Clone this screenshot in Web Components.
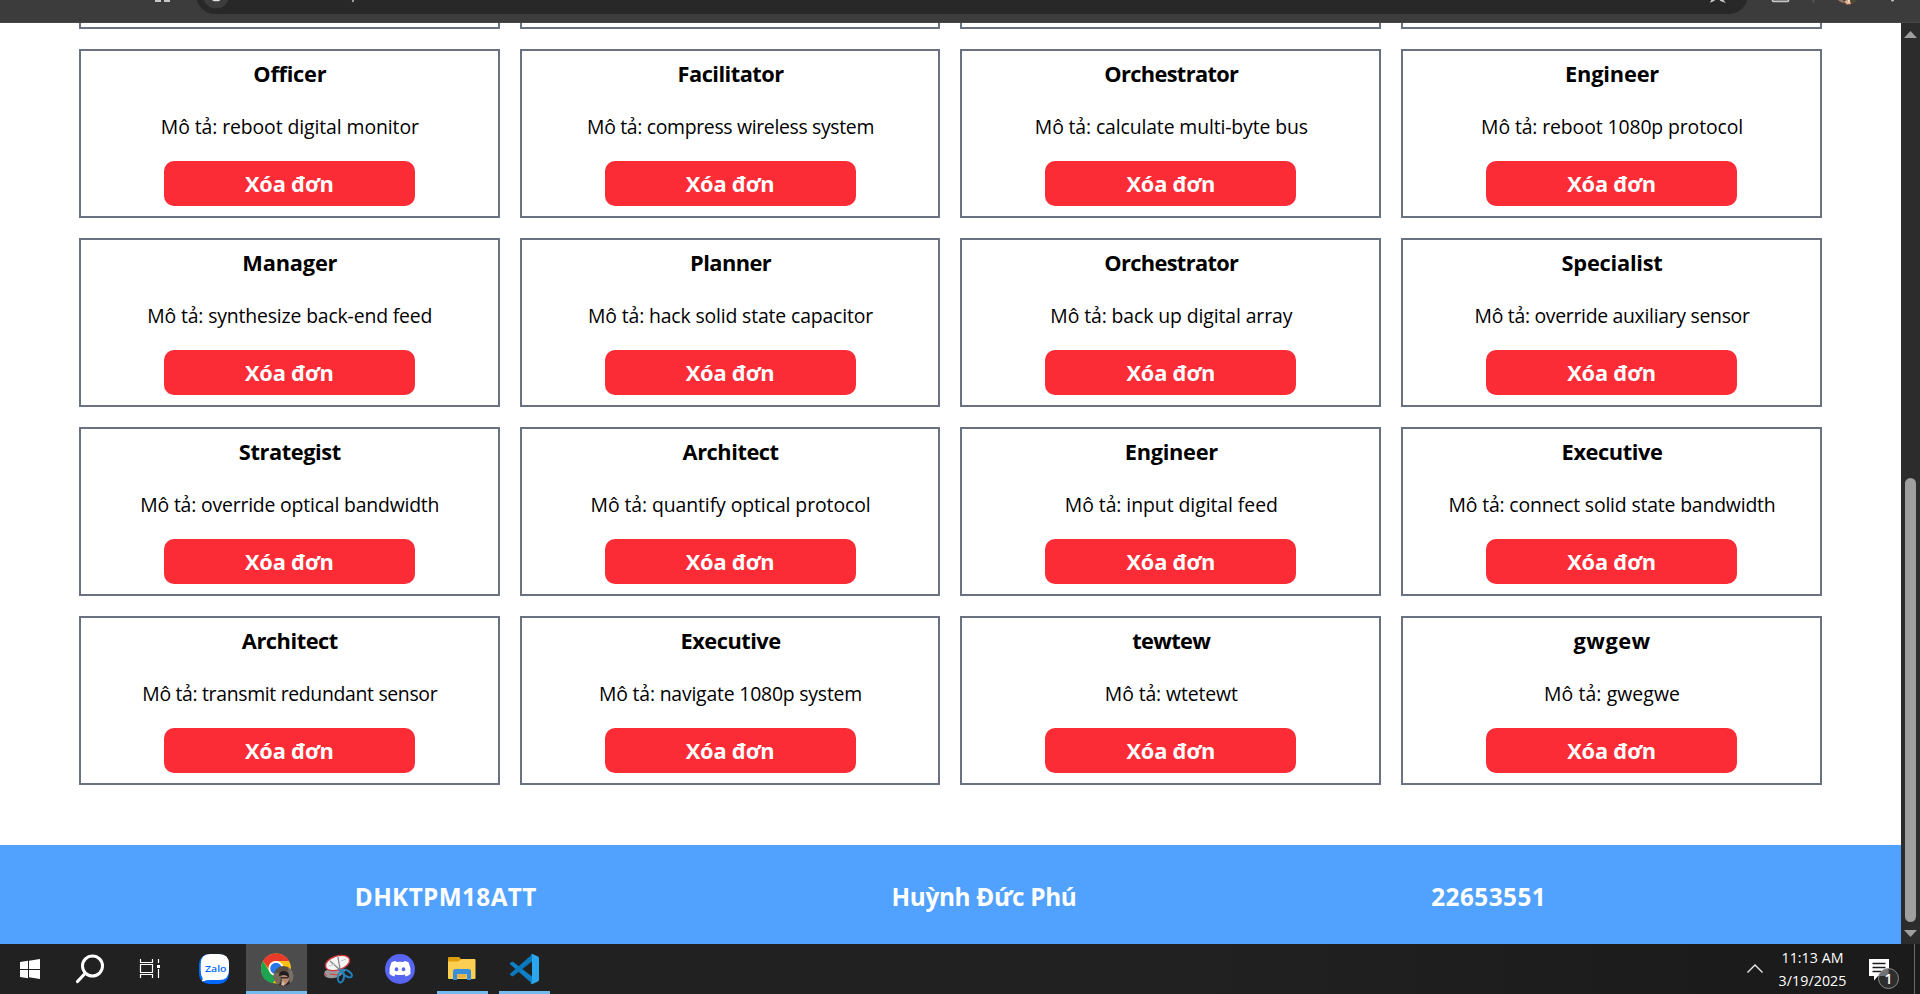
<!DOCTYPE html>
<html lang="vi">
<head>
<meta charset="utf-8">
<title>Orders</title>
<style>
html,body{margin:0;height:100%;overflow:hidden;background:#fff}
body{font-family:"Open Sans","Noto Sans",sans-serif}
</style>
</head>
<body>
<app-screen></app-screen>
<script>
const define = (name, html, setup) => customElements.define(name, class extends HTMLElement {
  connectedCallback() {
    if (this.shadowRoot) return;
    const root = this.attachShadow({ mode: 'open' });
    root.innerHTML = html;
    if (setup) setup(this, root);
  }
});

/* One line of text whose tracking is tuned so that it takes `w` pixels. */
define('fit-text', `<style>:host{display:inline-block;white-space:nowrap}span{display:inline-block}</style><span><slot></slot></span>`, (el, root) => {
  const span = root.querySelector('span'), w = +el.getAttribute('w');
  if (!w) return;
  const n = [...el.textContent].length;
  const ls = (w - span.getBoundingClientRect().width) / n;
  span.style.letterSpacing = ls.toFixed(3) + 'px';
});

define('browser-bar', `<style>
:host{display:block;height:23px;background:#3c3c3c;border-bottom:1px solid #474747;box-sizing:border-box;overflow:hidden}
svg{display:block}
</style>
<svg width="1920" height="22" viewBox="0 0 1920 22">
<path d="M197 0C199 8 206 14 216 14H1728C1738 14 1745 8 1747 0Z" fill="#282828"/>
<circle cx="216" cy="-5" r="13.300" fill="#3c3c3c"/>
<path d="M212 0h8.500l-1.700 1.300h-5z" fill="#dedede"/>
<path d="M155 0h6v2h-6zM164 0h6v2h-6z" fill="#c7c7c7"/>
<path d="M353.500 0L352.500 2" stroke="#c7c7c7" stroke-width="1.500"/>
<path d="M1713 -2L1711.500 1.300L1714.500 0M1721 -2L1723.500 1.300L1720 0" stroke="#c7c7c7" stroke-width="1.600" fill="none"/>
<path d="M1772.500 -2V.5Q1772.500 1.300 1773.300 1.300H1787.700Q1788.500 1.300 1788.500 .5V-2" stroke="#c7c7c7" stroke-width="1.700" fill="none"/>
<path d="M1813.500 0v2.500" stroke="#5e5e5e" stroke-width="1.500"/>
<path d="M1837.500 0H1857Q1854 5 1848 5Q1841 4.500 1837.500 0z" fill="#5a4035"/>
<path d="M1838 0h5l1 3q-4-1-6-3z" fill="#8e8078"/><path d="M1844 1.500l3-1.500 3 1 1 3-4 .5z" fill="#e0b094"/><path d="M1848 0h2v3l-2-1z" fill="#f4d8c0"/><path d="M1852 0h4l-3 3z" fill="#45522e"/>
<circle cx="1892.500" cy="0" r="1.500" fill="#c7c7c7"/>
</svg>`);

define('order-card', `<style>
:host{display:flex;flex-direction:column;align-items:center;box-sizing:border-box;height:169px;border:2px solid #6a7282;padding-top:7px;color:#000}
:host([blank]) button{display:none}
.t{height:32px;line-height:32px;font-weight:700;font-size:21.800px;padding-left:1px}
.d{margin-top:23px;height:28px;line-height:28px;font-size:19.400px;padding-left:1px}
button{margin:20px 0 0;padding:0;width:251px;height:45px;border:0;border-radius:10px;background:#fb2c36;color:#fff;font:700 21.800px/45px "Open Sans","Noto Sans",sans-serif;box-sizing:border-box}
</style>
<div class="t"><slot name="title"></slot></div>
<div class="d"><slot></slot></div>
<button><fit-text w="88.5">Xóa đơn</fit-text></button>`);

define('order-grid', `<style>
:host{display:grid;grid-template-columns:repeat(4,1fr);grid-auto-rows:169px;gap:20px;padding:0 79.050px 0 78.950px;box-sizing:border-box;margin-top:-163px}
</style>`, (el, root) => {
  const rows = [
    ['Officer',73,'reboot digital monitor',258],['Facilitator',106,'compress wireless system',287],['Orchestrator',134,'calculate multi-byte bus',273],['Engineer',94,'reboot 1080p protocol',262],
    ['Manager',95,'synthesize back-end feed',285],['Planner',81,'hack solid state capacitor',285],['Orchestrator',134,'back up digital array',242],['Specialist',101,'override auxiliary sensor',275],
    ['Strategist',102,'override optical bandwidth',299],['Architect',96,'quantify optical protocol',280],['Engineer',93,'input digital feed',213],['Executive',101,'connect solid state bandwidth',327],
    ['Architect',96,'transmit redundant sensor',295],['Executive',100,'navigate 1080p system',263],['tewtew',78,'wtetewt',133],['gwgew',77,'gwegwe',136]];
  const cell = ([t, tw, d, dw]) => `<order-card><fit-text slot="title" w="${tw}">${t}</fit-text><fit-text w="${dw}">Mô tả: ${d}</fit-text></order-card>`;
  const blank = '<order-card blank></order-card>'.repeat(4);
  root.innerHTML += blank + rows.map(cell).join('');
});

define('page-footer', `<style>
:host{display:flex;justify-content:space-evenly;box-sizing:border-box;height:99px;margin-top:60px;background:#51a2ff;color:#fff;font-weight:700;font-size:24.300px;line-height:36px;align-items:center}
div{padding-top:4px}
</style><div><fit-text w="182">DHKTPM18ATT</fit-text></div><div><fit-text w="185">Huỳnh Đức Phú</fit-text></div><div><fit-text w="115">22653551</fit-text></div>`);

define('scroll-bar', `<style>
:host{display:flex;flex-direction:column;align-items:center;width:19px;background:#2c2c2c;box-sizing:border-box;padding:8px 0 5px}
.thumb{width:11px;height:444px;border-radius:5.500px;background:#9f9f9f;margin-top:440px}
svg{display:block}.dn{margin-top:8px}
</style><svg width="13" height="7"><path d="M0 7L6.500 0L13 7z" fill="#9f9f9f"/></svg><div class="thumb"></div><svg class="dn" width="13" height="7"><path d="M0 0L6.500 7L13 0z" fill="#9f9f9f"/></svg>`);

define('task-bar', `<style>
:host{display:flex;height:50px;background:linear-gradient(90deg,#212121,#212121 60%,#1b1b1b 92%);color:#fff;overflow:hidden}
.apps{display:flex;flex:1}
.app{height:50px;box-sizing:border-box;flex:none}
.app svg{display:block}
.run{border-bottom:3px solid #76b9ed}
.active{background:#4c4c4c}
.clock{width:89px;text-align:center;font:14.200px/23px "Open Sans","Noto Sans",sans-serif;padding-top:2px}
.clock div{height:23px}
.tray{display:flex}
</style>
<div class="apps">
<svg width="246" height="50" viewBox="0 944 246 50">
<path d="M20 962l8-1.200v8.200h-8zM29 960.700l11-1.700v10H29zM20 970h8v8.200L20 977zM29 970h11v9l-11-1.700z" fill="#fff"/>
<circle cx="92.500" cy="966" r="10" fill="none" stroke="#fff" stroke-width="3"/><path d="M85 973.500l-7.500 8" stroke="#fff" stroke-width="3.200" stroke-linecap="round"/>
<path d="M140.500 959v3.500h12V959M140.500 978v-3.500h12v3.500M140.500 964.500h12v8h-12zM158.500 959v4M158.500 969v9" fill="none" stroke="#fff" stroke-width="1.200"/><path d="M157 965h3v3h-3z" fill="#fff"/>
<rect x="199" y="954" width="30" height="30" rx="10" fill="#0068ff"/>
<path d="M210 954h9q10 0 10 10v6q0 10-10 10h-8q-3 0-5 .3q-2 1.400-4.500.6q1.300-1 1.200-2.500q-2-3-2-8v-6q0-10.400 9.300-10.400z" fill="#fff"/>
<text x="205" y="971.500" font-family="Open Sans,sans-serif" font-size="9.700" font-weight="600" fill="#0068ff" textLength="21.500" lengthAdjust="spacingAndGlyphs">Zalo</text>
</svg>
<div class="app run active"><svg width="61" height="50" viewBox="246 944 61 50">
<circle cx="276" cy="968.500" r="15" fill="#fbc116"/>
<path d="M263 961Q267 953.500 276 953.500Q285 953.500 289 961H276Q268.500 961 268.500 968.500z" fill="#ea3a2c"/>
<path d="M263 961L270 972.500Q273 976 277 976L273 983.200Q261 981 261 968.500Q261 964.500 263 961z" fill="#1da451"/>
<circle cx="276" cy="968.500" r="7.500" fill="#fff"/><circle cx="276" cy="968.500" r="5.800" fill="#2876e8"/>
<clipPath id="av"><circle cx="283.500" cy="976" r="10"/></clipPath>
<g clip-path="url(#av)"><path d="M273 966h22v22h-22z" fill="#5b4f43"/><path d="M273 974q5-3 8 1l-2 11h-7z" fill="#79695a"/><path d="M288 967l7 4v15h-5z" fill="#76706a"/><path d="M281 976l2-3h5l1 6-2 6h-4z" fill="#b78a74"/><path d="M279 976q0-5 5-5q6 1 5 7q-2-3-5-3z" fill="#211c1b"/><path d="M281 977h7v1.500h-7z" fill="#3a2a28"/><path d="M277 987l4-5 4 3 4-4 4 6z" fill="#302925"/><path d="M282 981l3 2-1 3-3-1z" fill="#d8af98"/></g>
</svg></div>
<svg width="130" height="50" viewBox="307 944 130 50">
<path d="M325 971q-2 4 1 6q6 3 14-1l6-6-10-4z" fill="#9a9a9a"/>
<ellipse cx="337.500" cy="963" rx="12.500" ry="7" transform="rotate(-18 337.500 963)" fill="#f4f4f4" stroke="#d13438" stroke-width="1.300"/>
<path d="M330 961l9 8M338 957l2 12" stroke="#858585" stroke-width="1.300" fill="none"/><path d="M329 966l6-2M341 961l5-2" stroke="#c4c4c4" stroke-width="1" fill="none"/><path d="M324.500 973l2 3M330 974l8 1" stroke="#e03a40" stroke-width="1"/>
<g fill="none" stroke="#2182bd" stroke-width="2"><ellipse cx="341" cy="977" rx="3" ry="5.500" transform="rotate(10 341 977)"/><ellipse cx="347" cy="973.500" rx="2.800" ry="5.500" transform="rotate(-58 347 973.500)"/><path d="M339 969l3 3"/></g>
<circle cx="400" cy="969" r="15" fill="#5865f2"/>
<path d="M396.500 962l-1-1q-2.500.4-4.200 1.600Q388.800 968 389.500 974q2.200 1.900 4.600 2.400l1.200-2q4.700 1.300 9.400 0l1.200 2q2.400-.5 4.600-2.400Q411.200 968 408.700 962.600Q407 961.400 404.500 961l-1 1q-3.500-.6-7 0z" fill="#fff"/>
<ellipse cx="396.500" cy="969.200" rx="1.800" ry="2" fill="#5865f2"/><ellipse cx="403.500" cy="969.200" rx="1.800" ry="2" fill="#5865f2"/>
</svg>
<div class="app run"><svg width="51" height="50" viewBox="437 944 51 50">
<path d="M448 958q0-1 1-1h10l2.500 2.500V964H448z" fill="#dc9c0c"/><path d="M448 961.500h10l3.500-2.500h13q1 0 1 1v18q0 1-1 1h-25.500q-1 0-1-1z" fill="#fccf52"/>
<path d="M453 980v-8.500q0-2.500 2.500-2.500h13q2.500 0 2.500 2.500v8.500h-4v-5q0-1-1-1h-8q-1 0-1 1v5z" fill="#378fdb"/><path d="M457 974h9v4h-9z" fill="#e7b449"/>
</svg></div>
<svg width="11" height="50"></svg>
<div class="app run"><svg width="51" height="50" viewBox="499 944 51 50">
<path d="M509.500 963.700l2-1.700q1-.5 1.800.1L532 976.500v7z" fill="#0f80c6"/>
<path d="M509.500 974.300l2 1.700q1 .5 1.800-.1L532 961.500v-7z" fill="#0a78bc"/>
<path d="M531 954.200l1.500-.2 5.500 2.600q1 .5 1 1.600v21.600q0 1.100-1 1.600l-5.500 2.600-2-.5 1.500-1.500V955.500z" fill="#2aa7ee"/>
</svg></div>
</div>
<div class="tray">
<svg width="26" height="50" viewBox="1742 944 26 50"><path d="M1747.500 972.500l7.500-7.500 7.500 7.500" fill="none" stroke="#e8e8e8" stroke-width="1.400"/></svg>
<div class="clock"><div><fit-text w="62">11:13 AM</fit-text></div><div><fit-text w="68">3/19/2025</fit-text></div></div>
<svg width="63" height="50" viewBox="1857 944 63 50">
<path d="M1869 959h20v17h-11l-4 4.500V976h-5z" fill="#fff"/><path d="M1872.500 963.500h13M1872.500 967.500h13M1872.500 971.500h9" stroke="#1c1c1c" stroke-width="1.300"/>
<circle cx="1888.500" cy="978.500" r="10" fill="#303030" fill-opacity=".92" stroke="#8b8b8b" stroke-width="1"/>
<path d="M1879 976q1.500-7 9.500-7.500V976z" fill="#999" opacity=".55"/>
<text x="1888.500" y="983.800" text-anchor="middle" font-family="Open Sans,sans-serif" font-size="14" font-weight="600" fill="#fff">1</text>
<path d="M1914.500 944v50" stroke="#6a6a6a" stroke-width="1"/>
</svg>
</div>`);

define('app-screen', `<style>
:host{display:flex;flex-direction:column;width:1920px;height:994px;overflow:hidden}
.view{display:flex;height:921px;flex:none}
.page{flex:1;overflow:hidden;background:#fff;display:flow-root}
</style>
<browser-bar></browser-bar>
<div class="view"><div class="page"><order-grid></order-grid><page-footer></page-footer></div><scroll-bar></scroll-bar></div>
<task-bar></task-bar>`);
</script>
</body>
</html>
